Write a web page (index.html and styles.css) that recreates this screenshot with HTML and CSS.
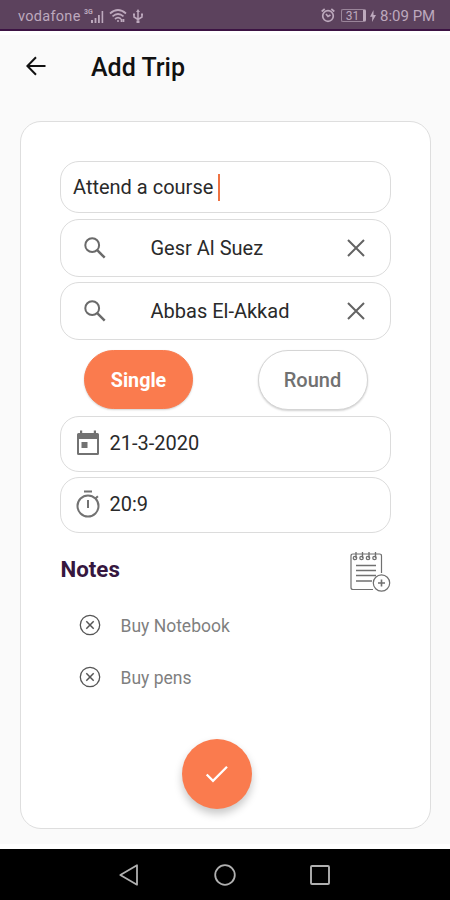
FILE: index.html
```html
<!DOCTYPE html>
<html lang="en">
<head>
<meta charset="utf-8">
<title>Add Trip</title>
<link rel="stylesheet" href="styles.css">
</head>
<body>
<div class="screen">
  <div class="status">
    <span class="carrier">vodafone</span>
    <span class="network">3G</span>
    <svg class="signal" width="13" height="12" viewBox="0 0 13 12" fill="currentColor"><path d="M0 9h2v3H0zM3.600 7h1.800v5H3.600zM7 4h1.800v8H7zM10.600 0h1.600v12h-1.600z"/></svg>
    <svg class="wifi" width="18" height="14" viewBox="0 0 18 14" fill="none" stroke="currentColor" stroke-width="1.700"><path d="M1 4.500Q9-2.500 17 4.500M3.500 7.300Q9 2.700 14.500 7.300M6 10Q9 7.300 12 10"/><path d="M8 12h2M12.500 10v3M14.500 10v3"/></svg>
    <svg class="usb" width="12" height="15" viewBox="0 0 12 15" fill="none" stroke="currentColor" stroke-width="1.500"><path d="M6 2v10M2 5.500v2.500l4 2.500 4-2.500V5.500"/><path d="M6 0l2 3H4zM4.500 11.500h3v2.500h-3zM1 4.500h2v2H1zM9 4.500h2v2H9z" fill="currentColor" stroke="none"/></svg>
    <span class="spacer"></span>
    <svg class="alarm" width="14" height="15" viewBox="0 0 14 15" fill="none" stroke="currentColor" stroke-width="1.700"><circle cx="7" cy="8" r="5.300"/><path d="M.7 3.500L3.700 1M13.300 3.500L10.300 1M5 6l2 2.500L9.500 7"/></svg>
    <span class="battery">31</span>
    <svg class="bolt" width="6" height="12" viewBox="0 0 6 12" fill="currentColor"><path d="M3.500 0L0 6.800h2.300L2 12l4-7H3.500z"/></svg>
    <span class="time">8:09 PM</span>
  </div>

  <header class="appbar">
    <svg class="back" width="20" height="20" viewBox="0 0 20 20" fill="none" stroke="#111" stroke-width="2"><path d="M19.500 10H1.800M10 1.200L1.400 10l8.600 8.800"/></svg>
    <h1>Add Trip</h1>
  </header>

  <main class="card">
    <div class="field name"><span>Attend a course</span><i class="caret"></i></div>
    <div class="field place">
      <svg class="search" width="22" height="22" viewBox="0 0 22 22" fill="none" stroke="#6a6a6a" stroke-width="2"><circle cx="8.200" cy="8.200" r="6.900"/><path d="M13.200 13.200L20.700 20.700" stroke-width="2.500"/></svg>
      <span class="value">Gesr Al Suez</span>
      <svg class="clear" width="18" height="18" viewBox="0 0 18 18" stroke="#636363" stroke-width="2"><path d="M1 1l16 16M17 1L1 17"/></svg>
    </div>
    <div class="field place">
      <svg class="search" width="22" height="22" viewBox="0 0 22 22" fill="none" stroke="#6a6a6a" stroke-width="2"><circle cx="8.200" cy="8.200" r="6.900"/><path d="M13.200 13.200L20.700 20.700" stroke-width="2.500"/></svg>
      <span class="value">Abbas El-Akkad</span>
      <svg class="clear" width="18" height="18" viewBox="0 0 18 18" stroke="#636363" stroke-width="2"><path d="M1 1l16 16M17 1L1 17"/></svg>
    </div>
    <div class="kinds">
      <button class="kind selected">Single</button>
      <button class="kind">Round</button>
    </div>
    <div class="field when">
      <svg width="24" height="26" viewBox="0 0 24 26"><path fill="#727272" fill-rule="evenodd" d="M4 .5h2.200V3h11.600V.5H20V3h1.500q1.500 0 1.500 1.500v19q0 1.500-1.500 1.500h-19Q1 25 1 23.500v-19Q1 3 2.500 3H4zM3 9v14h18V9zM5.500 12h6v6h-6z"/></svg>
      <span>21-3-2020</span>
    </div>
    <div class="field when">
      <svg width="24" height="28" viewBox="0 0 24 28" fill="none" stroke="#727272" stroke-width="2"><circle cx="12" cy="16" r="10.500"/><path d="M8 1.500h8M12 10v8M19.500 8.500l2.400-2.300"/></svg>
      <span>20:9</span>
    </div>
    <div class="notes-head">
      <h2>Notes</h2>
      <svg width="41" height="42" viewBox="0 0 41 42" fill="none" stroke="#707070" stroke-width="1.200"><path d="M31.500 22V5q0-2-2-2H3Q1 3 1 5v31.500q0 2 2 2h20"/><path d="M6 14.500h20M6 19.500h20M6 24.500h20M6 30h16" stroke-width="1.400"/><g stroke-width="1.300"><path d="M6 1v6M12.500 1v6M19 1v6M25.500 1v6"/><circle cx="5" cy="7" r="1.700"/><circle cx="11.500" cy="7" r="1.700"/><circle cx="18" cy="7" r="1.700"/><circle cx="24.500" cy="7" r="1.700"/></g><circle cx="31.500" cy="32" r="8.200" fill="#fff"/><path d="M31.500 28.500v7M28 32h7" stroke-width="1.600"/></svg>
    </div>
    <ul class="notes">
      <li><svg width="22" height="22" viewBox="0 0 22 22" fill="none" stroke="#555" stroke-width="1.300"><circle cx="11" cy="11" r="9.700"/><path d="M7.300 7.300l7.400 7.400M14.700 7.300l-7.400 7.400" stroke-width="1.500"/></svg><span>Buy Notebook</span></li>
      <li><svg width="22" height="22" viewBox="0 0 22 22" fill="none" stroke="#555" stroke-width="1.300"><circle cx="11" cy="11" r="9.700"/><path d="M7.300 7.300l7.400 7.400M14.700 7.300l-7.400 7.400" stroke-width="1.500"/></svg><span>Buy pens</span></li>
    </ul>
    <button class="done" aria-label="Save trip"><svg width="24" height="18" viewBox="0 0 24 18" fill="none" stroke="#fff" stroke-width="2.300"><path d="M1.700 9.500l6.300 6.300L22 1.800"/></svg></button>
  </main>

  <nav class="navbar">
    <svg width="20" height="22" viewBox="0 0 20 22" fill="none" stroke="#b0b0b0" stroke-width="1.800" stroke-linejoin="round"><path d="M18 1.300v19.400L1.300 11z"/></svg>
    <svg width="22" height="22" viewBox="0 0 22 22" fill="none" stroke="#b0b0b0" stroke-width="1.800"><circle cx="11" cy="11" r="9.800"/></svg>
    <svg width="20" height="20" viewBox="0 0 20 20" fill="none" stroke="#b0b0b0" stroke-width="1.900"><rect x="1" y="1" width="18" height="18" rx="1"/></svg>
  </nav>
</div>
</body>
</html>
```
FILE: styles.css
```css
* { box-sizing: border-box; }
body { margin: 0; font-family: Roboto, sans-serif; color: #2a2a2a; }
svg { display: block; flex: none; }
button { font: inherit; border: 0; padding: 0; }
span { white-space: nowrap; }
h1, h2, ul { margin: 0; padding: 0; }

.screen { width: 450px; height: 900px; display: flex; flex-direction: column; background: #fafafa; overflow: hidden; }

.status { height: 31px; flex: none; display: flex; align-items: center; padding: 2px 15px 0 18px; background: #5c425d; border-bottom: 2px solid #3c1243; color: #bda9bd; font-size: 14px; }
.carrier { font-size: 14.500px; width: 66px; letter-spacing: .3px; margin-top: 2px; }
.network { font-size: 7px; font-weight: 700; align-self: flex-start; margin-top: 6px; width: 8px; }
.signal { margin: 2px 0 0 -1px; }
.wifi { margin-left: 5px; }
.usb { margin-left: 5px; margin-top: 2px; }
.spacer { flex: 1; }
.alarm { margin-right: 6px; }
.battery { width: 25px; height: 13px; border: 1px solid #9a859a; border-right: 3px solid #bda9bd; border-radius: 2px; font-size: 12px; line-height: 12px; text-align: center; }
.bolt { margin: 0 4px 0 4px; }
.time { font-size: 15px; width: 55px; margin-top: 1px; }

.appbar { height: 90px; flex: none; display: flex; align-items: center; padding: 0 0 25px 26px; border-top: 4px solid #fff; }
.appbar h1 { margin: 4px 0 0 45px; font-size: 25px; font-weight: 500; color: #111; }

.card { margin: 0 19px 0 20px; height: 708px; flex: none; display: flex; flex-direction: column; padding: 39px 39px 0; background: #fff; border: 1.500px solid #dedede; border-radius: 21px; }
.field { display: flex; align-items: center; flex: none; border: 1.500px solid #dcdcdc; border-radius: 19px; background: #fff; font-size: 20px; }
.name { height: 52px; padding-left: 12px; }
.caret { width: 2px; height: 27px; margin-left: 5px; background: #ee7242; }
.place { height: 58px; margin-top: 6px; padding: 0 25.500px 0 23px; }
.place + .place { margin-top: 5px; }
.search { margin-right: 44.500px; }
.value { flex: 1; }
.kinds { display: flex; justify-content: space-between; flex: none; height: 60px; margin: 10px 23.500px 0 24px; }
.kind { width: 110px; height: 60px; border: 1.500px solid #d5d5d5; border-radius: 30px; background: #fff; color: #717171; font-size: 20px; font-weight: 500; box-shadow: 0 1px 2px rgba(0,0,0,.18); }
.kind.selected { width: 109px; height: 59px; padding-top: 2px; background: #fa7b4e; color: #fff; border-color: #fa7b4e; font-weight: 700; font-size: 19.700px; }
.when { height: 56px; margin-top: 5px; padding: 0 0 2px 15px; gap: 9.500px; }
.kinds + .when { margin-top: 6px; }
.notes-head { display: flex; justify-content: space-between; flex: none; height: 42px; margin-top: 18px; }
.notes-head h2 { font-size: 22.300px; line-height: 36px; margin-left: .5px; font-weight: 700; color: #36173f; }
.notes { list-style: none; margin-top: 6px; }
.notes li { display: flex; align-items: center; height: 52px; padding-left: 19px; gap: 19.500px; font-size: 17.500px; color: #7f7f7f; }
.notes li span { padding-top: 2px; }
.done { display: flex; align-items: center; justify-content: center; flex: none; width: 70px; height: 70px; margin: 36px 0 0 122px; border-radius: 50%; background: #fa7b4e; box-shadow: 0 5px 8px rgba(0,0,0,.22); }

.navbar { display: flex; align-items: center; flex: none; height: 56px; margin-top: 15px; padding: 1px 120px 0 119px; justify-content: space-between; background: #000; border-top: 5px solid #fff; }
```
